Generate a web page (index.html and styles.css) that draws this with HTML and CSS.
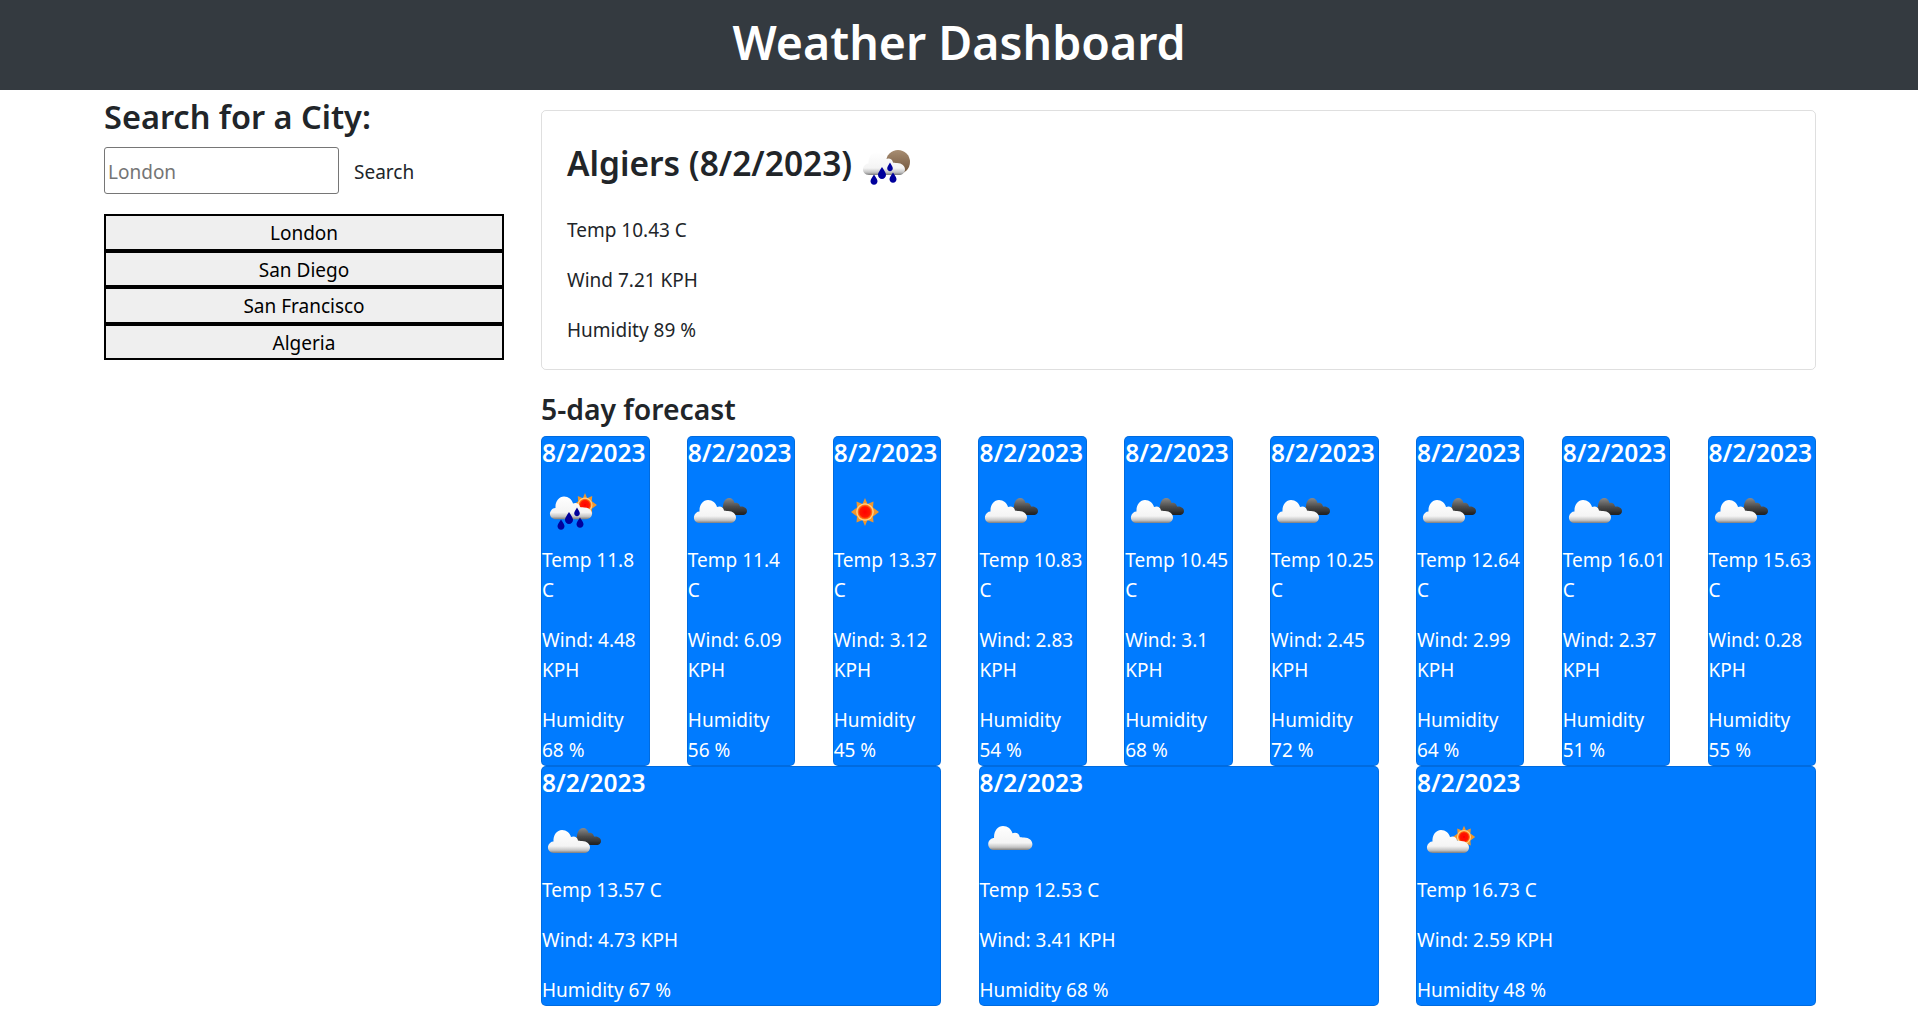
FILE: index.html
```html
<!DOCTYPE html>
<html>
<head>
  <meta charset="UTF-8">
  <title>Weather Dashboard</title>
  <link rel="stylesheet" href="styles.css">
</head>
<body>
<svg class="sprite" aria-hidden="true">
  <defs>
    <linearGradient id="whiteFill" x1="0" y1="0" x2="0" y2="1">
      <stop offset="0" stop-color="#ffffff"/>
      <stop offset="0.7" stop-color="#f4f4f4"/>
      <stop offset="0.88" stop-color="#c4c4c4"/>
      <stop offset="1" stop-color="#7d7d7d"/>
    </linearGradient>
    <linearGradient id="darkFill" x1="0" y1="0" x2="0" y2="1">
      <stop offset="0" stop-color="#8a8a8a"/>
      <stop offset="0.5" stop-color="#4d4d4d"/>
      <stop offset="1" stop-color="#1e1e1e"/>
    </linearGradient>
    <linearGradient id="moonFill" x1="0" y1="0" x2="0" y2="1">
      <stop offset="0" stop-color="#a78d72"/>
      <stop offset="1" stop-color="#6e5238"/>
    </linearGradient>
    <radialGradient id="sunFill">
      <stop offset="0" stop-color="#ff0000"/>
      <stop offset="0.7" stop-color="#ff1800"/>
      <stop offset="1" stop-color="#ff9a20"/>
    </radialGradient>
    <filter id="soft" x="-10%" y="-10%" width="120%" height="120%">
      <feGaussianBlur stdDeviation="0.35"/>
    </filter>
    <path id="whiteCloud" fill="url(#whiteFill)" d="M12 42C8 42 5.500 39 6 35.500 6.500 32.500 9 30.500 11.500 30.500 11 24 15 19 20 19 24.500 19 28 22 29 26 32 24.500 35.500 26 36 29.500 37 29.800 38 29.800 40 30 45 30 48 33 48 36.500 48 40 45 42 42 42Z"/>
    <path id="darkCloud" fill="url(#darkFill)" d="M37 34C34 34 32 32.500 32 30 32 27 34 26 35 26 35 21 37.500 17 41 17 44 17 46 19 46.500 22 49 21 51.500 22.500 52 25.500 55 25 59 26.500 59 30 59 32.500 57 34 55 34Z"/>
    <g id="sunShape">
      <path fill="#f0962c" d="M0-14 2.500-8 8.500-10.500 8-4.500 14 0 8 4.500 8.500 10.500 2.500 8 0 14-2.500 8-8.500 10.500-8 4.500-14 0-8-4.500-8.500-10.500-2.500-8Z"/>
      <circle r="8.800" fill="#ffcf8a"/>
      <circle r="7.500" fill="url(#sunFill)"/>
    </g>
    <g id="drops" fill="#00009c">
      <path d="M19 38.500C16.800 42 15.500 43.500 15.500 45.300 15.500 47.200 17 48.800 19 48.800 21 48.800 22.500 47.200 22.500 45.300 22.500 43.500 21.200 42 19 38.500Z"/>
      <path d="M27 31C24.200 35.500 23 37 23 39 23 41.300 24.800 43 27 43 29.200 43 31 41.300 31 39 31 37 29.800 35.500 27 31Z"/>
      <path d="M38 36.500C35.800 40 34.500 41.500 34.500 43.300 34.500 45.200 36 46.800 38 46.800 40 46.800 41.500 45.200 41.500 43.300 41.500 41.500 40.200 40 38 36.500Z"/>
      <path d="M35 26.500C33.300 29.500 32.200 30.800 32.200 32.300 32.200 33.900 33.400 35.200 35 35.200 36.600 35.200 37.800 33.900 37.800 32.300 37.800 30.800 36.700 29.500 35 26.500Z"/>
    </g>
    <symbol id="icon-scattered" viewBox="0 0 62 62">
      <g filter="url(#soft)"><use href="#whiteCloud" transform="translate(2 -5) scale(1.050)"/></g>
    </symbol>
    <symbol id="icon-broken" viewBox="0 0 62 62">
      <g filter="url(#soft)">
        <use href="#darkCloud"/>
        <use href="#whiteCloud"/>
      </g>
    </symbol>
    <symbol id="icon-clear" viewBox="0 0 62 62">
      <use href="#sunShape" transform="translate(31 31)"/>
    </symbol>
    <symbol id="icon-few" viewBox="0 0 62 62">
      <g filter="url(#soft)">
        <use href="#sunShape" transform="translate(47 26) scale(.8)"/>
        <use href="#whiteCloud" transform="translate(4 0)"/>
      </g>
    </symbol>
    <symbol id="icon-rain-day" viewBox="0 0 62 62">
      <g filter="url(#soft)">
        <use href="#sunShape" transform="translate(43 24) scale(.85)"/>
        <use href="#whiteCloud" transform="translate(2 -3) scale(1 .98)"/>
        <use href="#drops"/>
      </g>
    </symbol>
    <symbol id="icon-rain-night" viewBox="0 0 62 62">
      <g filter="url(#soft)">
        <circle cx="43" cy="26" r="12" fill="url(#moonFill)"/>
        <use href="#whiteCloud" transform="translate(2 -3)"/>
        <use href="#drops"/>
      </g>
    </symbol>
  </defs>
</svg>

<header class="banner">
  <h1>Weather Dashboard</h1>
</header>

<div class="layout">
  <aside class="sidebar">
    <h3 class="search-title">Search for a City:</h3>
    <form class="search-form">
      <input class="search-input" type="text" placeholder="London">
      <button class="search-btn" type="button">Search</button>
    </form>
    <div class="history">
      <button class="history-btn" type="button">London</button>
      <button class="history-btn" type="button">San Diego</button>
      <button class="history-btn" type="button">San Francisco</button>
      <button class="history-btn" type="button">Algeria</button>
    </div>
  </aside>

  <main class="content">
    <section class="today">
      <h3 class="today-title">
        <span>Algiers (8/2/2023)</span>
        <svg class="icon"><use href="#icon-rain-night"/></svg>
      </h3>
      <p>Temp 10.43 C</p>
      <p>Wind 7.21 KPH</p>
      <p>Humidity 89 %</p>
    </section>

    <h4 class="forecast-title">5-day forecast</h4>
    <div class="forecast">
      <div class="day">
        <h5>8/2/2023</h5>
        <svg class="icon"><use href="#icon-rain-day"/></svg>
        <p>Temp 11.8 C</p>
        <p>Wind: 4.48 KPH</p>
        <p>Humidity 68 %</p>
      </div>
      <div class="day">
        <h5>8/2/2023</h5>
        <svg class="icon"><use href="#icon-broken"/></svg>
        <p>Temp 11.4 C</p>
        <p>Wind: 6.09 KPH</p>
        <p>Humidity 56 %</p>
      </div>
      <div class="day">
        <h5>8/2/2023</h5>
        <svg class="icon"><use href="#icon-clear"/></svg>
        <p>Temp 13.37 C</p>
        <p>Wind: 3.12 KPH</p>
        <p>Humidity 45 %</p>
      </div>
      <div class="day">
        <h5>8/2/2023</h5>
        <svg class="icon"><use href="#icon-broken"/></svg>
        <p>Temp 10.83 C</p>
        <p>Wind: 2.83 KPH</p>
        <p>Humidity 54 %</p>
      </div>
      <div class="day">
        <h5>8/2/2023</h5>
        <svg class="icon"><use href="#icon-broken"/></svg>
        <p>Temp 10.45 C</p>
        <p>Wind: 3.1 KPH</p>
        <p>Humidity 68 %</p>
      </div>
      <div class="day">
        <h5>8/2/2023</h5>
        <svg class="icon"><use href="#icon-broken"/></svg>
        <p>Temp 10.25 C</p>
        <p>Wind: 2.45 KPH</p>
        <p>Humidity 72 %</p>
      </div>
      <div class="day">
        <h5>8/2/2023</h5>
        <svg class="icon"><use href="#icon-broken"/></svg>
        <p>Temp 12.64 C</p>
        <p>Wind: 2.99 KPH</p>
        <p>Humidity 64 %</p>
      </div>
      <div class="day">
        <h5>8/2/2023</h5>
        <svg class="icon"><use href="#icon-broken"/></svg>
        <p>Temp 16.01 C</p>
        <p>Wind: 2.37 KPH</p>
        <p>Humidity 51 %</p>
      </div>
      <div class="day">
        <h5>8/2/2023</h5>
        <svg class="icon"><use href="#icon-broken"/></svg>
        <p>Temp 15.63 C</p>
        <p>Wind: 0.28 KPH</p>
        <p>Humidity 55 %</p>
      </div>
      <div class="day wide">
        <h5>8/2/2023</h5>
        <svg class="icon"><use href="#icon-broken"/></svg>
        <p>Temp 13.57 C</p>
        <p>Wind: 4.73 KPH</p>
        <p>Humidity 67 %</p>
      </div>
      <div class="day wide">
        <h5>8/2/2023</h5>
        <svg class="icon"><use href="#icon-scattered"/></svg>
        <p>Temp 12.53 C</p>
        <p>Wind: 3.41 KPH</p>
        <p>Humidity 68 %</p>
      </div>
      <div class="day wide">
        <h5>8/2/2023</h5>
        <svg class="icon"><use href="#icon-few"/></svg>
        <p>Temp 16.73 C</p>
        <p>Wind: 2.59 KPH</p>
        <p>Humidity 48 %</p>
      </div>
    </div>
  </main>
</div>
</body>
</html>
```

FILE: styles.css
```css
* { box-sizing: border-box; }
body { margin: 0; font-family: "Noto Sans", "Open Sans", Arial, sans-serif; font-size: 19px; line-height: 30px; color: #212529; background: #fff; }
h1, h3, h4, h5, p { margin: 0; }
.sprite { display: block; width: 0; height: 0; }

.banner { height: 90px; background: #343a40; color: #fff; text-align: center; }
.banner h1 { font-size: 46.500px; font-weight: 600; line-height: 84px; }

.layout { display: flex; gap: 37px; padding: 0 102px 0 104px; }
.sidebar { width: 400px; flex: none; }
.content { width: 1275px; flex: none; padding-top: 20px; }

.search-title { font-size: 32.500px; font-weight: 600; line-height: 42px; margin-top: 6px; margin-bottom: 9px; }
.search-form { display: flex; margin-bottom: 20px; }
.search-input { width: 235px; height: 47px; padding: 3px 3px 1px; border: 1px solid #767676; border-radius: 3px; font: inherit; }
.search-input::placeholder { color: #757575; }
.search-btn { padding: 2px 15px 0; border: 0; background: none; font: inherit; color: #212529; }

.history-btn { display: block; width: 100%; height: 36.500px; padding: 2px 0 0; border: 2px solid #000; background: #efefef; font: inherit; line-height: 30px; color: #000; }

.today { height: 260px; padding: 25px; border: 1px solid rgba(0, 0, 0, .125); border-radius: 5px; }
.today-title { display: flex; align-items: flex-start; height: 69px; margin-bottom: 10px; font-size: 33.500px; font-weight: 600; line-height: 55px; }
.today-title .icon { margin-left: 3px; }
.today p { margin-bottom: 20px; }
.today p:last-child { margin-bottom: 0; }

.forecast-title { font-size: 28.300px; font-weight: 600; line-height: 36px; margin-top: 21px; margin-bottom: 9px; }
.forecast { display: flex; flex-wrap: wrap; justify-content: space-between; }

.day { width: 108.500px; border: 1px solid rgba(0, 0, 0, .125); border-radius: 5px; background: #007bff; color: #fff; }
.day.wide { width: 400px; }
.day h5 { padding-top: 1px; font-size: 24.500px; font-weight: 600; line-height: 30px; margin-bottom: 13px; }
.day p { margin-bottom: 20px; }
.day p:last-child { margin-bottom: 0; }

.icon { display: block; flex: none; width: 62px; height: 62px; }
.day .icon { margin-bottom: 2px; }
```
